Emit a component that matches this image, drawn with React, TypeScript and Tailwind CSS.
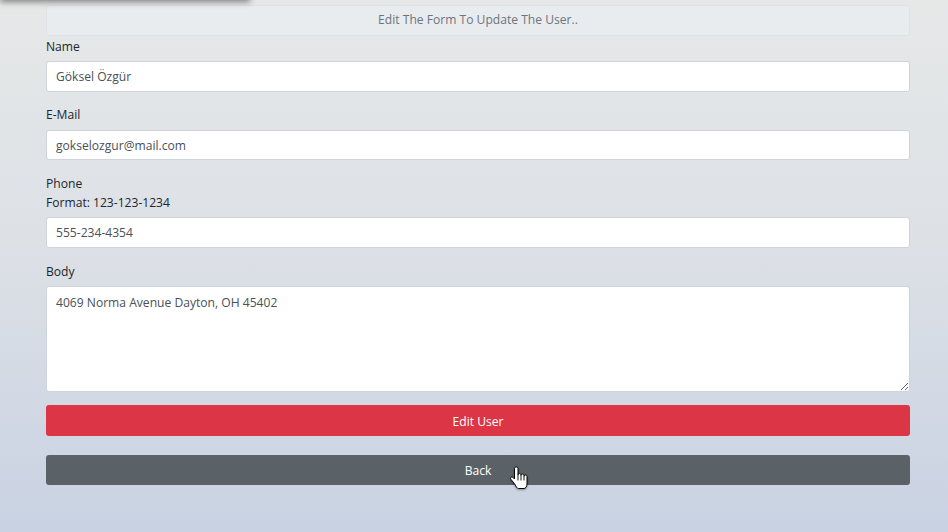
import React from "react";

function HandCursor() {
  return (
    <svg
      width="18"
      height="24"
      viewBox="-0.5 -0.5 18 24"
      className="absolute left-[510px] top-[466px] pointer-events-none drop-shadow-[0_1px_1px_rgba(0,0,0,0.35)]"
    >
      <path
        d="M5.5 0.5 C4.7 0.5 4 1.2 4 2 V12.5 L2.5 11 C1.9 10.4 0.9 10.4 0.4 11 C-0.1 11.5 0 12.3 0.5 12.9 L4.5 18 C5.5 20 6.5 22 8 22 H13.5 C15 22 16.5 20 16.5 17.5 V10 C16.5 9.2 15.8 8.5 15 8.5 C14.2 8.5 13.5 9.2 13.5 10 V9 C13.5 8.2 12.8 7.5 12 7.5 C11.2 7.5 10.5 8.2 10.5 9 V8.5 C10.5 7.7 9.8 7 9 7 C8.2 7 7.5 7.7 7.5 8.5 V2 C7.5 1.2 6.8 0.5 6 0.5 Z"
        fill="#fff"
        stroke="#000"
        strokeWidth="1"
        strokeLinejoin="round"
      />
      <path d="M7.5 8.5 V14 M10.5 9 V14 M13.5 10 V14" stroke="#000" strokeWidth="0.9" fill="none" />
    </svg>
  );
}

export default function App() {
  const font = { fontFamily: '"Open Sans", "Noto Sans", sans-serif' };
  return (
    <div
      className="relative w-[948px] h-[532px] overflow-hidden bg-[linear-gradient(180deg,#e6e8e8_0%,#dde1e6_45%,#c9d2e3_100%)] text-[12.1px] text-[#212529]"
      style={font}
    >
      <div className="absolute left-0 top-[-12px] w-[250px] h-[12px] shadow-[0_2px_6px_rgba(0,0,0,0.45)] bg-[#e6e8e8]" />

      <div className="ml-[46px] w-[864px] pt-[5px] flex flex-col">
        <div className="h-[31px] flex items-center justify-center rounded-[3px] border border-[#dee2e6] bg-[#e9ecef] text-[#6c757d]">
          Edit The Form To Update The User..
        </div>

        <div className="h-[19px] leading-[19px] mt-[1px]">Name</div>
        <input
          className="mt-[5px] h-[31px] rounded-[3px] border border-[#ced4da] bg-white px-[9px] text-[#495057] outline-none"
          defaultValue="Göksel Özgür"
        />

        <div className="h-[19px] leading-[19px] mt-[13px]">E-Mail</div>
        <input
          className="mt-[6px] h-[30px] rounded-[3px] border border-[#ced4da] bg-white px-[9px] text-[#495057] outline-none"
          defaultValue="gokselozgur@mail.com"
        />

        <div className="h-[19px] leading-[19px] mt-[14px]">Phone</div>
        <div className="h-[19px] leading-[19px]">Format: 123-123-1234</div>
        <input
          className="mt-[5px] h-[31px] rounded-[3px] border border-[#ced4da] bg-white px-[9px] text-[#495057] outline-none"
          defaultValue="555-234-4354"
        />

        <div className="h-[19px] leading-[19px] mt-[14px]">Body</div>
        <textarea
          className="mt-[5px] h-[106px] rounded-[3px] border border-[#ced4da] bg-white px-[9px] py-[6px] text-[#495057] outline-none leading-[19px]"
          defaultValue="4069 Norma Avenue Dayton, OH 45402"
        />

        <button className="mt-[13px] h-[31px] pt-[3px] rounded-[3px] bg-[#dc3545] text-white">Edit User</button>
        <button className="mt-[19px] h-[30px] pt-[3px] rounded-[3px] bg-[#5a6268] text-white">Back</button>
      </div>

      <HandCursor />
    </div>
  );
}
